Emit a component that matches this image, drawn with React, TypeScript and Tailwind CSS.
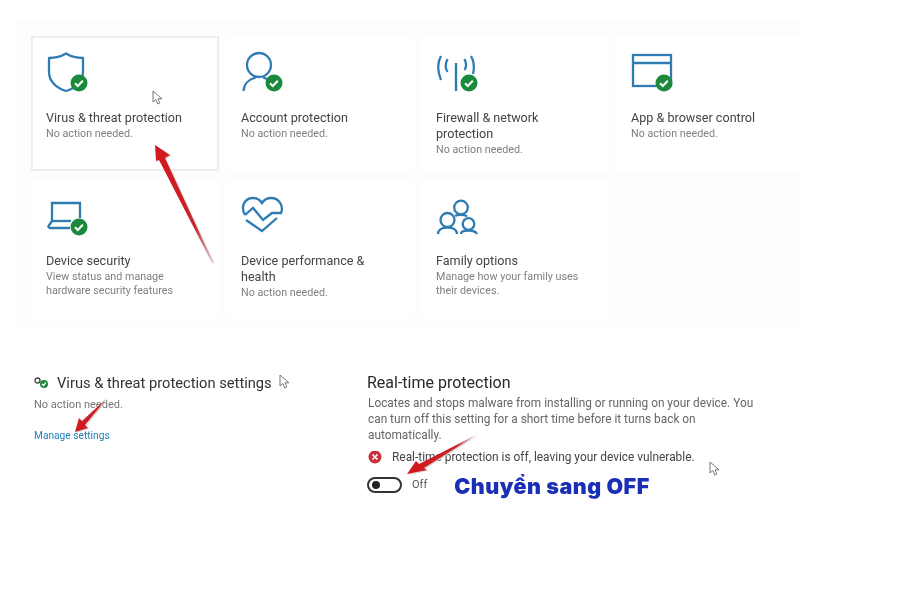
import type { ReactNode } from 'react'

const BLUE = '#2f7cb3'

function Badge() {
  return (
    <g stroke="none">
      <circle cx="33" cy="33" r="8.500" fill="#1c8a3c" />
      <path d="M29 33.200l2.800 2.800 5-5.200" fill="none" stroke="#fff" strokeWidth="2" />
    </g>
  )
}

function Icon({ children, check = true }: { children: ReactNode; check?: boolean }) {
  return (
    <svg width="44" height="44" viewBox="0 0 44 44" fill="none" stroke={BLUE} strokeWidth="2.300">
      {children}
      {check && <Badge />}
    </svg>
  )
}

const icons = {
  shield: (
    <path d="M3 8C9 8 15 6.500 20 3.500C25 6.500 31 8 37 8V22C37 31 30 38 20 41C10 38 3 31 3 22Z" strokeLinejoin="round" />
  ),
  account: (
    <>
      <circle cx="18" cy="15" r="12" />
      <path d="M2.500 41C3 34 8 29 15 27.500" />
      <path d="M22 27.500C24 28 25 28.500 27 29.500" />
    </>
  ),
  firewall: (
    <>
      <path d="M20 13V41" strokeWidth="2.400" />
      <path d="M11.500 9C9 14 9 18 11.500 22" />
      <path d="M5 6C1 13 1 20 5 30" />
      <path d="M28.500 9C30.500 13 30.500 17 28.500 20" />
      <path d="M35 6C38.500 12 38.500 18 37 24" />
    </>
  ),
  app: (
    <>
      <rect x="2" y="5" width="38" height="31" />
      <path d="M2 13H40" />
    </>
  ),
  laptop: (
    <>
      <path d="M6 27V9H34V24" />
      <path d="M6 27L2.500 32C2 33 3 34 4 34H24" />
      <path d="M6 27H25" />
    </>
  ),
  heart: (
    <>
      <path d="M4 21C-1 12 4 4 12 4C16 4 19 6 21 9C23 6 26 4 30 4C38 4 43 12 40 19" />
      <path d="M4 21L12 14L22 26L31 19H41" />
      <path d="M5 26L21 37L36 24" />
    </>
  ),
  family: (
    <>
      <circle cx="25" cy="13.500" r="6.800" />
      <circle cx="11.500" cy="26" r="7" />
      <circle cx="32.500" cy="30" r="5.800" />
      <path d="M2 40C2 36 6 33.500 11.500 33.500C17 33.500 21 36 21 40" />
      <path d="M25 40C25 38 28 36.500 32.500 36.500C37 36.500 40 38 41 40" />
      <path d="M19 22C21 20.500 29 20.500 31 22.500" />
    </>
  ),
}

const cards = [
  { icon: icons.shield, title: ['Virus & threat protection'], sub: ['No action needed.'], selected: true },
  { icon: icons.account, title: ['Account protection'], sub: ['No action needed.'] },
  { icon: icons.firewall, title: ['Firewall & network', 'protection'], sub: ['No action needed.'] },
  { icon: icons.app, title: ['App & browser control'], sub: ['No action needed.'] },
  { icon: icons.laptop, title: ['Device security'], sub: ['View status and manage', 'hardware security features'], lower: true },
  { icon: icons.heart, title: ['Device performance &', 'health'], sub: ['No action needed.'], nocheck: true, lower: true },
  { icon: icons.family, title: ['Family options'], sub: ['Manage how your family uses', 'their devices.'], nocheck: true, lower: true },
]

function Cursor({ className }: { className: string }) {
  return (
    <svg className={`absolute ${className}`} width="11" height="15" viewBox="0 0 11 15">
      <path d="M1 1V12L3.800 9.500L5.800 14L7.800 13L6 8.800H10Z" fill="#fff" stroke="#777" strokeWidth="1" />
    </svg>
  )
}

// red marker arrows, tail fades out like the ones pasted on the original
function Arrow({ className, w, h, body, id, y1, x2, y2 }: { className: string; w: number; h: number; body: string; id: string; y1: number; x2: number; y2: number }) {
  return (
    <svg className={`absolute ${className}`} width={w} height={h} viewBox={`0 0 ${w} ${h}`}>
      <defs>
        <linearGradient id={id} gradientUnits="userSpaceOnUse" x1="3" y1={y1} x2={x2} y2={y2}>
          <stop offset="0" stopColor="#d4171e" />
          <stop offset="0.700" stopColor="#c9252b" />
          <stop offset="1" stopColor="#d9c9c9" />
        </linearGradient>
      </defs>
      <path d={body} fill="#cfcfcf" transform="translate(1.500 1)" opacity="0.700" />
      <path d={body} fill={`url(#${id})`} />
    </svg>
  )
}

export default function App() {
  return (
    <div className="relative w-[900px] h-[600px] overflow-hidden bg-white blur-[0.4px] font-['Roboto','Liberation_Sans',sans-serif]">
      <div className="ml-[15px] pt-[20px]">
        <div className="w-[785px] h-[308px] bg-[#fdfdfd] pt-[16px] pl-[16px]">
          <div className="grid grid-cols-[188px_188px_188px_185px] grid-rows-[135px_138px] gap-x-[7px] gap-y-[9px]">
            {cards.map((c) => (
              <div
                key={c.title[0]}
                className={c.selected ? 'border-2 border-[#ededed] bg-white pl-[13px] pt-[12px]' : 'bg-white pl-[15px] pt-[14px]'}
              >
                <Icon check={!c.nocheck}>{c.icon}</Icon>
                <div className={`${c.lower ? 'mt-[15px]' : 'mt-[16px]'} text-[12.600px] leading-[16px] text-[#444]`}>
                  {c.title.map((t) => (
                    <div key={t}>{t}</div>
                  ))}
                </div>
                <div className="mt-[1px] text-[10.750px] leading-[14px] text-[#808080]">
                  {c.sub.map((t) => (
                    <div key={t}>{t}</div>
                  ))}
                </div>
              </div>
            ))}
          </div>
        </div>
      </div>

      <div className="flex mt-[45px] pl-[34px]">
        <div className="w-[333px]">
          <div className="flex items-center h-[20px] text-[14.700px] text-[#333]">
            <svg className="mr-[8px]" width="15" height="12" viewBox="0 0 15 12">
              <circle cx="3.500" cy="3.500" r="2.500" fill="none" stroke="#444" strokeWidth="1.400" />
              <circle cx="10" cy="7" r="4" fill="#1c8a3c" />
              <path d="M8 7l1.500 1.500 2.500-3" fill="none" stroke="#fff" strokeWidth="1.200" />
            </svg>
            Virus &amp; threat protection settings
          </div>
          <div className="mt-[4px] text-[11px] leading-[16px] text-[#777]">No action needed.</div>
          <div className="mt-[15px] text-[10.200px] leading-[16px] text-[#1f7fb8]">Manage settings</div>
        </div>
        <div className="w-[400px]">
          <div className="h-[20px] leading-[20px] text-[16px] text-[#2a2a2a]">Real-time protection</div>
          <div className="mt-[2px] ml-px text-[11.850px] leading-[16px] text-[#666] w-[390px]">
            Locates and stops malware from installing or running on your device. You can turn off this setting for a short time before it turns back on automatically.
          </div>
          <div className="flex items-center mt-[7px] h-[16px] text-[11.900px] text-[#444]">
            <svg className="mr-[10px] ml-px" width="14" height="14" viewBox="0 0 14 14">
              <circle cx="7" cy="6" r="6.500" fill="#c8303a" />
              <path d="M4.500 3.500l5 5M9.500 3.500l-5 5" stroke="#fff" strokeWidth="1.600" />
            </svg>
            Real-time protection is off, leaving your device vulnerable.
          </div>
          <div className="flex items-center mt-[7px] h-[24px]">
            <div className="flex items-center w-[35px] h-[16px] rounded-full border-2 border-[#333] pl-[3px]">
              <div className="w-[8px] h-[8px] rounded-full bg-[#222]" />
            </div>
            <span className="ml-[10px] text-[11px] text-[#555]">Off</span>
            <span className="ml-[27px] mt-[2px] text-[21.500px] font-['Inter',sans-serif] font-black tracking-[0.5px] text-[#1a2fb5]">
              Chuyển sang OFF
            </span>
          </div>
        </div>
      </div>

      <Cursor className="left-[152px] top-[90px]" />
      <Cursor className="left-[279px] top-[374px]" />
      <Cursor className="left-[709px] top-[461px]" />

      <Arrow
        id="arrow-card"
        y1={3}
        x2={63}
        y2={120}
        className="left-[150px] top-[142px]"
        w={70}
        h={126}
        body="M5 3L20 13L15 16L63 120L62 121L9 18L6 19Z"
      />
      <Arrow
        id="arrow-manage"
        y1={38}
        x2={36}
        y2={3}
        className="left-[72px] top-[394px]"
        w={40}
        h={42}
        body="M3 38L7 24L10 27L36 3L13 31L16 34Z"
      />
      <Arrow
        id="arrow-toggle"
        y1={43}
        x2={74}
        y2={3}
        className="left-[404px] top-[431px]"
        w={78}
        h={46}
        body="M3 43L12 30L15 33L74 3L20 37L23 39Z"
      />
    </div>
  )
}
